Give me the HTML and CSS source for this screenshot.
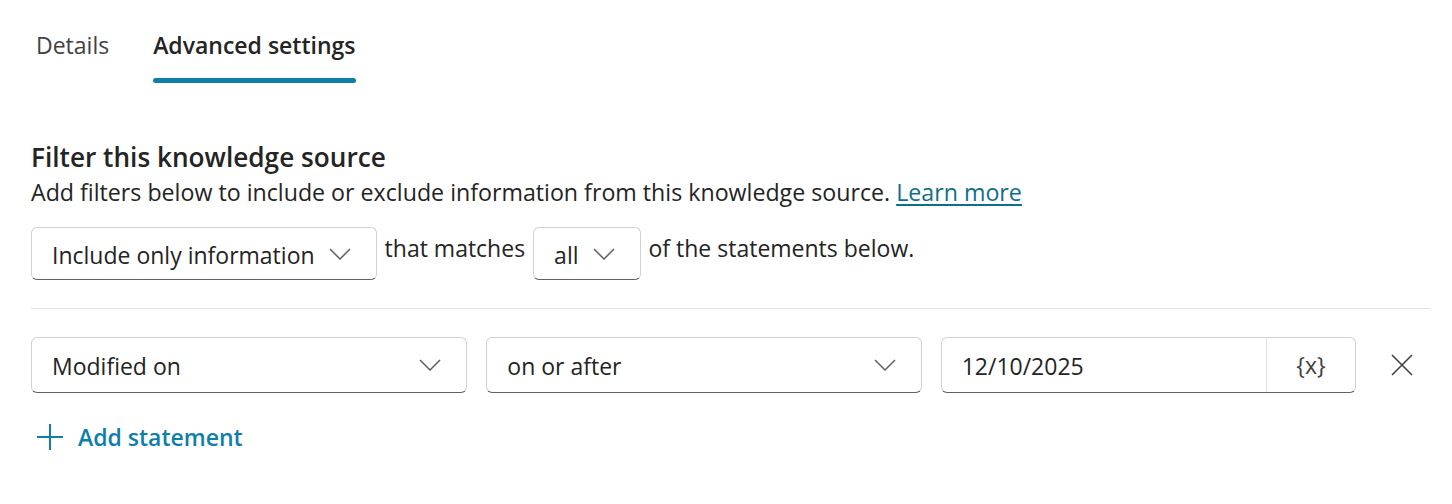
FILE: index.html
```html
<!DOCTYPE html>
<html lang="en">
<head>
<meta charset="utf-8">
<title>Advanced settings</title>
<link rel="stylesheet" href="styles.css">
</head>
<body>
<div class="tabs">
  <div class="tab"><span class="tab-label">Details</span><span class="tab-indicator"></span></div>
  <div class="tab active"><span class="tab-label">Advanced settings</span><span class="tab-indicator"></span></div>
</div>
<div class="section">
  <h2 class="heading">Filter this knowledge source</h2>
  <p class="desc">Add filters below to include or exclude information from this knowledge source. <a class="link" href="#">Learn more</a></p>
  <div class="mode-row">
    <div class="box box-inline">
      <span class="box-text">Include only information</span>
      <svg class="chev" viewBox="0 0 22 12" width="22" height="12"><path d="M1 1 L11 11 L21 1" /></svg>
    </div>
    <span class="inline-text">that matches</span>
    <div class="box box-inline">
      <span class="box-text">all</span>
      <svg class="chev" viewBox="0 0 22 12" width="22" height="12"><path d="M1 1 L11 11 L21 1" /></svg>
    </div>
    <span class="inline-text">of the statements below.</span>
  </div>
  <div class="divider"></div>
  <div class="statement-row">
    <div class="box box-fill">
      <span class="box-text">Modified on</span>
      <svg class="chev" viewBox="0 0 22 12" width="22" height="12"><path d="M1 1 L11 11 L21 1" /></svg>
    </div>
    <div class="box box-fill">
      <span class="box-text">on or after</span>
      <svg class="chev" viewBox="0 0 22 12" width="22" height="12"><path d="M1 1 L11 11 L21 1" /></svg>
    </div>
    <div class="box box-date">
      <span class="box-text date-text">12/10/2025</span>
      <span class="var-btn">{x}</span>
    </div>
    <div class="remove">
      <svg viewBox="0 0 22 22" width="22" height="22"><path d="M1 1 L21 21 M21 1 L1 21" /></svg>
    </div>
  </div>
  <div class="add-row">
    <svg class="plus" viewBox="0 0 26 26" width="26" height="26"><path d="M13 0 V26 M0 13 H26" /></svg>
    <span class="add-text">Add statement</span>
  </div>
</div>
</body>
</html>
```
FILE: styles.css
```css
body {
  margin: 0;
  background: #ffffff;
  color: #242424;
  font-family: "Open Sans", "Noto Sans", sans-serif;
}

.tabs {
  display: flex;
  gap: 44px;
  padding: 25px 0 0 36px;
}

.tab {
  display: flex;
  flex-direction: column;
  font-size: 23px;
  line-height: 40px;
  color: #424242;
}

.tab.active {
  color: #242424;
  font-weight: 600;
}

.tab-indicator {
  height: 5px;
  margin-top: 13px;
  border-radius: 3px;
  background: transparent;
}

.tab.active .tab-indicator {
  background: #0f7fa9;
}

.section {
  padding: 57px 22px 0 31px;
}

.heading {
  margin: 0;
  font-size: 26.2px;
  line-height: 35px;
  font-weight: 600;
  color: #242424;
}

.desc {
  margin: 0;
  font-size: 23.2px;
  line-height: 35px;
  color: #242424;
}

.link {
  color: #0f6e8c;
  text-decoration: underline;
  text-underline-offset: 3px;
}

.mode-row {
  display: flex;
  align-items: flex-start;
  gap: 8px;
  margin-top: 17px;
  height: 53px;
}

.inline-text {
  margin-top: 4px;
  font-size: 23px;
  line-height: 35px;
}

.box {
  box-sizing: border-box;
  display: flex;
  align-items: center;
  border: 1px solid #d1d1d1;
  border-bottom-color: #616161;
  border-radius: 6px;
  background: #ffffff;
  font-size: 23px;
}

.box-inline {
  height: 53px;
  padding: 0 25px 0 20px;
  gap: 14px;
}

.box-fill {
  height: 56px;
  padding: 0 25px 0 20px;
  justify-content: space-between;
}

.box-text {
  white-space: nowrap;
  padding-top: 2px;
}

.chev path {
  fill: none;
  stroke: #616161;
  stroke-width: 1.5;
}

.divider {
  height: 1px;
  margin-top: 28px;
  background: #e0e0e0;
}

.statement-row {
  display: grid;
  grid-template-columns: 436fr 435fr 415fr 55fr;
  gap: 19px;
  margin-top: 28px;
  align-items: center;
}

.box-date {
  height: 56px;
  padding-left: 20px;
}

.date-text {
  flex: 1;
}

.var-btn {
  display: flex;
  align-items: center;
  justify-content: center;
  width: 88px;
  align-self: stretch;
  border-left: 1px solid #e0e0e0;
  color: #424242;
  font-size: 23px;
}

.remove {
  display: flex;
  justify-content: center;
  align-items: center;
}

.remove path {
  fill: none;
  stroke: #424242;
  stroke-width: 1.6;
}

.add-row {
  display: flex;
  align-items: center;
  gap: 15px;
  height: 34px;
  margin-top: 27px;
  padding-left: 6px;
}

.plus path {
  fill: none;
  stroke: #0f7fa9;
  stroke-width: 2;
}

.add-text {
  font-size: 23px;
  font-weight: 600;
  color: #0f7fa9;
  line-height: 34px;
}
```
